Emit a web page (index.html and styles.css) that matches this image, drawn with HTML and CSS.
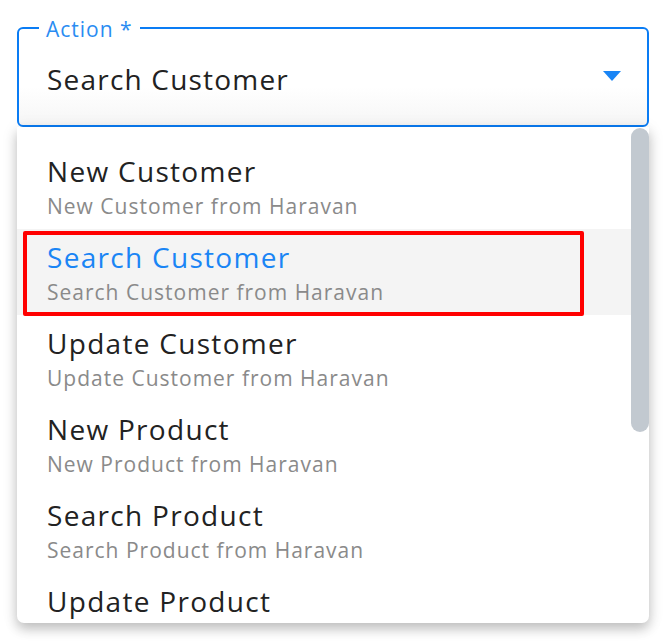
FILE: index.html
```html
<!DOCTYPE html>
<html lang="en">
<head>
    <meta charset="UTF-8">
    <meta name="viewport" content="width=device-width, initial-scale=1.0">
    <title>Action select</title>
    <link rel="stylesheet" href="styles.css">
</head>
<body>
    <div class="field">
        <div class="select">
            <span class="select-label">Action *</span>
            <span class="select-value">Search Customer</span>
            <svg class="select-arrow" viewBox="0 0 18 10"><path d="M0 0 L18 0 L9 10 Z" fill="#1a85f5"/></svg>
        </div>
        <div class="menu">
            <ul class="options">
                <li class="option">
                    <div class="option-title">New Customer</div>
                    <div class="option-sub">New Customer from Haravan</div>
                </li>
                <li class="option selected">
                    <div class="option-title">Search Customer</div>
                    <div class="option-sub">Search Customer from Haravan</div>
                    <span class="mark"></span>
                </li>
                <li class="option">
                    <div class="option-title">Update Customer</div>
                    <div class="option-sub">Update Customer from Haravan</div>
                </li>
                <li class="option">
                    <div class="option-title">New Product</div>
                    <div class="option-sub">New Product from Haravan</div>
                </li>
                <li class="option">
                    <div class="option-title">Search Product</div>
                    <div class="option-sub">Search Product from Haravan</div>
                </li>
                <li class="option">
                    <div class="option-title">Update Product</div>
                </li>
            </ul>
            <span class="thumb"></span>
        </div>
    </div>
</body>
</html>
```

FILE: styles.css
```css
body, html {
    margin: 0;
    padding: 0;
    background: #fff;
    font-family: 'Open Sans', 'Noto Sans', sans-serif;
    overflow: hidden;
}
.field {
    width: 632px;
    height: 614px;
    padding: 27px 0 0 17px;
}
.select {
    position: relative;
    box-sizing: border-box;
    height: 100px;
    border: 2px solid #0a7cf4;
    border-radius: 6px;
    background: linear-gradient(to bottom, #fff 60%, #f6f6f6 100%);
    display: flex;
    align-items: center;
    padding: 0 26px 0 28px;
}
.select-label {
    position: absolute;
    top: -13px;
    left: 20px;
    padding: 0 7px;
    background: #fff;
    color: #2a8cf2;
    font-size: 21px;
    line-height: 26px;
    letter-spacing: 1px;
}
.select-value {
    flex: 1;
    font-size: 28px;
    color: #222;
    letter-spacing: 1.2px;
    margin-top: 3px;
}
.select-arrow {
    width: 18px;
    height: 10px;
    margin-top: -2px;
}
.menu {
    position: relative;
    height: 496px;
    overflow: hidden;
    background: #fff;
    border-radius: 0 0 7px 7px;
    box-shadow: 0 6px 12px rgba(0, 0, 0, 0.22), 0 2px 18px rgba(0, 0, 0, 0.08);
}
.options {
    list-style: none;
    margin: 0;
    padding: 16px 18px 0 0;
}
.thumb {
    position: absolute;
    right: 0;
    top: 1px;
    width: 18px;
    height: 304px;
    background: #c2c9d0;
    border-radius: 9px;
}
.option {
    position: relative;
    height: 86px;
    box-sizing: border-box;
    padding: 10px 30px 0;
}
.option.selected {
    background: #f4f4f4;
}
.option-title {
    font-size: 28px;
    line-height: 36px;
    color: #222;
    letter-spacing: 1.3px;
}
.selected .option-title {
    color: #1a85f5;
}
.option-sub {
    font-size: 21px;
    line-height: 34px;
    color: #8a8a8a;
    letter-spacing: 1px;
}
.mark {
    position: absolute;
    left: 6px;
    top: 2px;
    width: 561px;
    height: 85px;
    box-sizing: border-box;
    border: 4px solid #ff0000;
    border-radius: 2px;
}
```
